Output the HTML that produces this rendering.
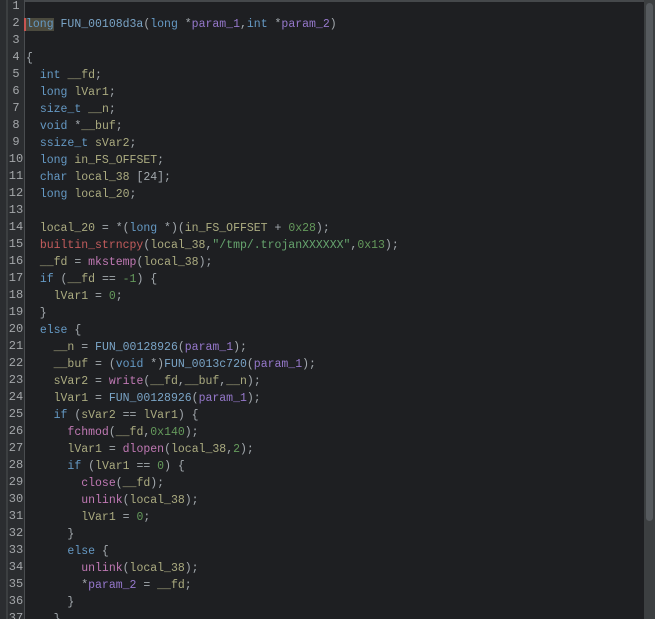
<!DOCTYPE html><html><head><style>
html,body{margin:0;width:655px;height:619px;overflow:hidden}
body{background:#1e1f22;font-family:"Liberation Mono",monospace;font-size:11.5px;position:relative}
.top{position:absolute;left:0;top:0;width:655px;height:2px;background:#45484b}
.g0{position:absolute;left:0;top:0;width:6px;height:619px;background:#2b2d30}
.g1{position:absolute;left:6px;top:0;width:2px;height:619px;background:#3c3f41}
.gut{position:absolute;left:8px;top:0;width:16px;height:619px;background:#2b2d30;border-right:1px solid #4a4d50}
.sb{position:absolute;left:644px;top:0;width:11px;height:619px;background:#3c3f41}
.th{position:absolute;left:646px;top:3px;width:7px;height:518px;background:#565a5e;border-radius:4px}
.ln{position:absolute;left:8px;width:16px;text-align:center;color:#a4a7aa;font-size:12px}
.code{position:absolute;left:26px;top:-1px;white-space:pre;color:#a3a9ae;line-height:17px}
.k{color:#6599c4}.v{color:#abab80}.f{color:#7aa4c6}.p{color:#9678cc}.n{color:#659a5c}.s{color:#66a46e}.b{color:#c25c5c}.m{color:#c079b4}
.hl{background:#4b4a3e;box-shadow:-2px 0 0 #c75450}
</style></head><body>
<div class="top"></div><div class="g0"></div><div class="g1"></div><div class="gut"></div>
<div id="nums"></div>
<div class="code"> 
<span class="k hl">long</span> <span class="f">FUN_00108d3a</span>(<span class="k">long</span> *<span class="p">param_1</span>,<span class="k">int</span> *<span class="p">param_2</span>)

{
  <span class="k">int</span> <span class="v">__fd</span>;
  <span class="k">long</span> <span class="v">lVar1</span>;
  <span class="k">size_t</span> <span class="v">__n</span>;
  <span class="k">void</span> *<span class="v">__buf</span>;
  <span class="k">ssize_t</span> <span class="v">sVar2</span>;
  <span class="k">long</span> <span class="v">in_FS_OFFSET</span>;
  <span class="k">char</span> <span class="v">local_38</span> [24];
  <span class="k">long</span> <span class="v">local_20</span>;

  <span class="v">local_20</span> = *(<span class="k">long</span> *)(<span class="v">in_FS_OFFSET</span> + <span class="n">0x28</span>);
  <span class="b">builtin_strncpy</span>(<span class="v">local_38</span>,<span class="s">"/tmp/.trojanXXXXXX"</span>,<span class="n">0x13</span>);
  <span class="v">__fd</span> = <span class="m">mkstemp</span>(<span class="v">local_38</span>);
  <span class="k">if</span> (<span class="v">__fd</span> == <span class="n">-1</span>) {
    <span class="v">lVar1</span> = <span class="n">0</span>;
  }
  <span class="k">else</span> {
    <span class="v">__n</span> = <span class="f">FUN_00128926</span>(<span class="p">param_1</span>);
    <span class="v">__buf</span> = (<span class="k">void</span> *)<span class="f">FUN_0013c720</span>(<span class="p">param_1</span>);
    <span class="v">sVar2</span> = <span class="m">write</span>(<span class="v">__fd</span>,<span class="v">__buf</span>,<span class="v">__n</span>);
    <span class="v">lVar1</span> = <span class="f">FUN_00128926</span>(<span class="p">param_1</span>);
    <span class="k">if</span> (<span class="v">sVar2</span> == <span class="v">lVar1</span>) {
      <span class="m">fchmod</span>(<span class="v">__fd</span>,<span class="n">0x140</span>);
      <span class="v">lVar1</span> = <span class="m">dlopen</span>(<span class="v">local_38</span>,<span class="n">2</span>);
      <span class="k">if</span> (<span class="v">lVar1</span> == <span class="n">0</span>) {
        <span class="m">close</span>(<span class="v">__fd</span>);
        <span class="m">unlink</span>(<span class="v">local_38</span>);
        <span class="v">lVar1</span> = <span class="n">0</span>;
      }
      <span class="k">else</span> {
        <span class="m">unlink</span>(<span class="v">local_38</span>);
        *<span class="p">param_2</span> = <span class="v">__fd</span>;
      }
    }
</div>
<div class="sb"></div><div class="th"></div>
<script>
var h='';for(var i=1;i<=37;i++){h+='<div class="ln" style="top:'+(-2+(i-1)*17)+'px;line-height:17px">'+i+'</div>';}
document.getElementById('nums').innerHTML=h;
</script>
</body></html>
